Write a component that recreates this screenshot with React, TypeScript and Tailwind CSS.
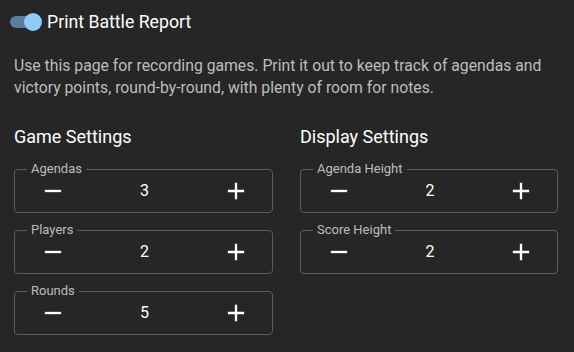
import { useState } from 'react';

function Minus() {
  return (
    <svg viewBox="0 0 24 24" className="h-7 w-7" fill="currentColor">
      <path d="M19 13H5v-2h14v2z" />
    </svg>
  );
}

function Plus() {
  return (
    <svg viewBox="0 0 24 24" className="h-7 w-7" fill="currentColor">
      <path d="M19 13h-6v6h-2v-6H5v-2h6V5h2v6h6v2z" />
    </svg>
  );
}

function Stepper({ label, value }: { label: string; value: number }) {
  const [n, setN] = useState(value);
  return (
    <div className="relative h-[44px] rounded border border-[#5c5c5c] flex items-center justify-between pl-[18px] pr-[16px]">
      <span className="absolute -top-[9px] left-3 px-1 bg-[#262626] text-[13px] leading-4 text-[#bdbdbd]">
        {label}
      </span>
      <button className="flex h-10 w-10 items-center justify-center text-white" onClick={() => setN(n - 1)}>
        <Minus />
      </button>
      <span className="text-base text-white">{n}</span>
      <button className="flex h-10 w-10 items-center justify-center text-white" onClick={() => setN(n + 1)}>
        <Plus />
      </button>
    </div>
  );
}

export default function App() {
  const [on, setOn] = useState(true);
  return (
    <div
      className="min-h-[352px] w-[574px] bg-[#262626] pl-[14px] pr-4 pt-[13px]"
      style={{ fontFamily: 'Roboto, "Liberation Sans", sans-serif' }}
    >
      {/* Header toggle */}
      <div className="flex h-[18px] items-center gap-1">
        <button className="relative h-[18px] w-[32px] -ml-1" onClick={() => setOn(!on)}>
          <span className="absolute left-[0px] top-[3px] h-[12px] w-[29px] rounded-full bg-[#5b7c9b]" />
          <span className="absolute left-[14px] top-0 h-[18px] w-[18px] rounded-full bg-[#90caf9]" />
        </button>
        <span className="ml-[1px] text-[17.7px] leading-6 text-white">Print Battle Report</span>
      </div>

      <p className="mt-[24px] text-[15.75px] leading-[22px] text-[#bdbdbd]">
        Use this page for recording games. Print it out to keep track of agendas and victory points,
        round-by-round, with plenty of room for notes.
      </p>

      <div className="mt-[26px] grid grid-cols-[259px_258px] gap-x-[27px]">
        <div>
          <h2 className="text-lg leading-6 text-white">Game Settings</h2>
          <div className="mt-5 flex flex-col gap-[17px]">
            <Stepper label="Agendas" value={3} />
            <Stepper label="Players" value={2} />
            <Stepper label="Rounds" value={5} />
          </div>
        </div>
        <div>
          <h2 className="text-lg leading-6 text-white">Display Settings</h2>
          <div className="mt-5 flex flex-col gap-[17px]">
            <Stepper label="Agenda Height" value={2} />
            <Stepper label="Score Height" value={2} />
          </div>
        </div>
      </div>
    </div>
  );
}
